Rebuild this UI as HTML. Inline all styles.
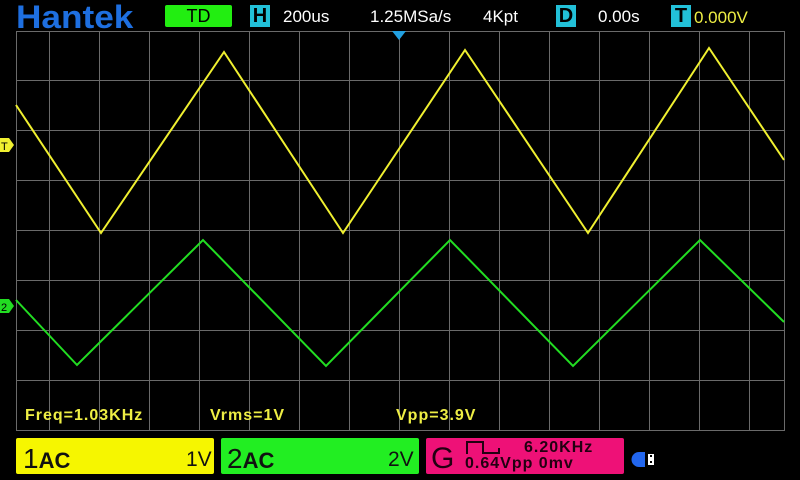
<!DOCTYPE html><html><head><style>
body{margin:0;width:800px;height:480px;background:#000;overflow:hidden;font-family:"Liberation Sans",sans-serif;position:relative}
.a{position:absolute;white-space:nowrap;line-height:1}
</style></head><body>
<div class="a" style="left:16px;top:1px;font-size:32px;font-weight:bold;color:#1e6fe0;letter-spacing:0px;transform:scaleX(1.1);transform-origin:left">Hantek</div>
<div class="a" style="left:165px;top:5px;width:67px;height:22px;background:#22ee11;border-radius:2px;color:#000;font-size:18px;text-align:center;line-height:22px">TD</div>
<div class="a" style="left:250px;top:5px;width:20px;height:22px;background:#22c0d8;color:#000;font-size:20px;font-weight:bold;text-align:center;line-height:22px">H</div>
<div class="a" style="left:283px;top:8px;font-size:17px;color:#fff">200us</div>
<div class="a" style="left:370px;top:8px;font-size:17px;color:#fff">1.25MSa/s</div>
<div class="a" style="left:483px;top:8px;font-size:17px;color:#fff">4Kpt</div>
<div class="a" style="left:556px;top:5px;width:20px;height:22px;background:#22c0d8;color:#000;font-size:20px;font-weight:bold;text-align:center;line-height:22px">D</div>
<div class="a" style="left:598px;top:8px;font-size:17px;color:#fff">0.00s</div>
<div class="a" style="left:671px;top:5px;width:20px;height:22px;background:#22c0d8;color:#000;font-size:20px;font-weight:bold;text-align:center;line-height:22px">T</div>
<div class="a" style="left:694px;top:9px;font-size:17px;color:#eeee44">0.000V</div>
<svg class="a" style="left:0;top:0" width="800" height="480">
<g stroke="#6a6a6a" stroke-width="1" fill="none">
<rect x="16.5" y="31.5" width="768" height="399"/>
<path d="M49.5 31V430M99.5 31V430M149.5 31V430M199.5 31V430M249.5 31V430M299.5 31V430M349.5 31V430M399.5 31V430M449.5 31V430M499.5 31V430M549.5 31V430M599.5 31V430M649.5 31V430M699.5 31V430M749.5 31V430"/>
<path d="M16 80.5H784M16 130.5H784M16 180.5H784M16 230.5H784M16 280.5H784M16 330.5H784M16 380.5H784"/>
</g>
<polygon points="392,31 406,31 399,40" fill="#22a0e0"/>
<polyline fill="none" stroke="#22dd22" stroke-width="2" points="16,300 77,365 203,240 326,366 450,240 573,366 700,240 784,322"/>
<polyline fill="none" stroke="#f0f030" stroke-width="2" points="16,105 101,233 224,52 343,233 465,50 588,233 709,48 784,160"/>
<polygon points="0,138 9,138 14,145 9,152 0,152" fill="#f0f030"/>
<text x="1" y="150" font-size="11" font-family="Liberation Sans" fill="#000">T</text>
<polygon points="0,299 9,299 14,306 9,313 0,313" fill="#22dd22"/>
<text x="1" y="311" font-size="11" font-family="Liberation Sans" fill="#000">2</text>
<path d="M639 452h6v15h-6a7.5 7.5 0 0 1 0-15z" fill="#2266ee"/>
<rect x="645" y="452" width="11" height="15" fill="#000"/><rect x="648" y="454" width="6" height="11" fill="#fff"/>
<path d="M650 456h2M650 462h2" stroke="#000" stroke-width="2"/>
</svg>
<div class="a" style="left:25px;top:408px;font-size:16px;font-weight:bold;color:#eeee44;letter-spacing:1px">Freq=1.03KHz</div>
<div class="a" style="left:210px;top:408px;font-size:16px;font-weight:bold;color:#eeee44;letter-spacing:1px">Vrms=1V</div>
<div class="a" style="left:396px;top:408px;font-size:16px;font-weight:bold;color:#eeee44;letter-spacing:1px">Vpp=3.9V</div>
<div class="a" style="left:16px;top:438px;width:198px;height:36px;background:#f6f600;border-radius:2px"></div>
<div class="a" style="left:23px;top:445px;font-size:28px;color:#111">1<span style="font-size:22px;font-weight:bold">AC</span></div>
<div class="a" style="left:186px;top:449px;font-size:21px;color:#111">1V</div>
<div class="a" style="left:221px;top:438px;width:198px;height:36px;background:#22ee22;border-radius:2px"></div>
<div class="a" style="left:227px;top:445px;font-size:28px;color:#111">2<span style="font-size:22px;font-weight:bold">AC</span></div>
<div class="a" style="left:388px;top:449px;font-size:21px;color:#111">2V</div>
<div class="a" style="left:426px;top:438px;width:198px;height:36px;background:#ee1177;border-radius:2px"></div>
<div class="a" style="left:431px;top:444px;font-size:30px;color:#220011">G</div>
<svg class="a" style="left:466px;top:441px" width="40" height="14"><path d="M1 13V1H17V12H33V7" fill="none" stroke="#220011" stroke-width="2"/></svg>
<div class="a" style="left:524px;top:440px;font-size:16px;font-weight:bold;color:#220011;letter-spacing:1px">6.20KHz</div>
<div class="a" style="left:465px;top:456px;font-size:16px;font-weight:bold;color:#220011;letter-spacing:1px">0.64Vpp 0mv</div>
</body></html>
